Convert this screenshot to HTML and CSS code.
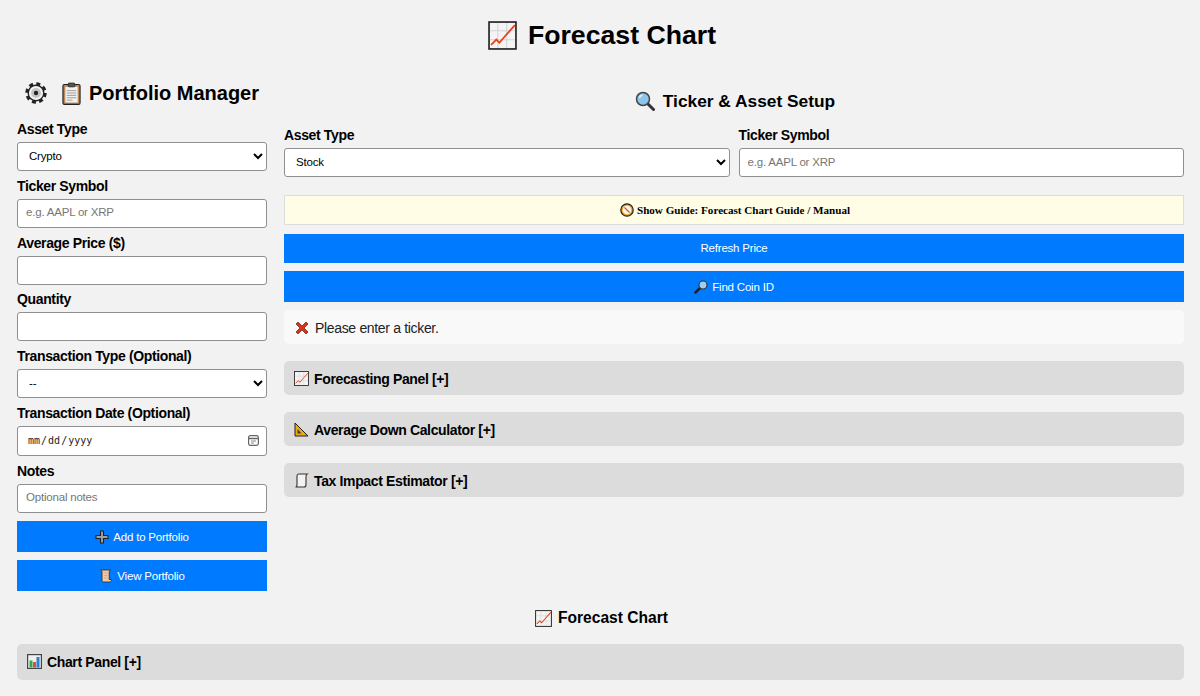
FILE: index.html
```html
<!DOCTYPE html>
<html lang="en">
<head>
<meta charset="utf-8">
<title>Forecast Chart</title>
<link rel="stylesheet" href="styles.css">
</head>
<body>
<svg class="defs" width="0" height="0" aria-hidden="true">
  <defs>
    <symbol id="chart" viewBox="0 0 28 28">
      <rect x="1" y="1" width="26" height="26" fill="#f4f4f4" stroke="#222" stroke-width="1.6"/>
      <path d="M9.5 2v24M18 2v24M2 9.5h24M2 18h24" stroke="#d4d4d4" stroke-width="1" fill="none"/>
      <path d="M3 23l5-5 3 3 6-7 9-10" stroke="#e8421c" stroke-width="1.8" fill="none"/>
    </symbol>
  </defs>
</svg>
<h1 class="page-title"><svg class="ic ic-title"><use href="#chart"/></svg>Forecast Chart</h1>
<main class="layout">
  <aside class="sidebar">
    <h2 class="side-title">
      <svg class="ic ic-gear" viewBox="0 0 24 24"><circle cx="12" cy="12" r="10" fill="none" stroke="#222" stroke-width="3.400" stroke-dasharray="4.300 3.554"/><circle cx="12" cy="12" r="8.500" fill="#f2f2f2" stroke="#222" stroke-width="1.500"/><circle cx="12" cy="12" r="5.400" fill="#c4c4c4"/><circle cx="12" cy="12" r="2.400" fill="#222"/></svg>
      <svg class="ic ic-clip" viewBox="0 0 20 24"><rect x="1" y="2.500" width="18" height="21" rx="1.500" fill="#b98a5e" stroke="#222" stroke-width="1.200"/><rect x="3.500" y="5" width="13" height="16.500" fill="#f1f1ee"/><path d="M5 9h10M5 11.500h10M5 14h10M5 16.500h10M5 19h6" stroke="#999" stroke-width="1"/><rect x="6.500" y="1" width="7" height="4" rx="1" fill="#555" stroke="#222" stroke-width=".8"/></svg>
      Portfolio Manager
    </h2>
    <form class="form">
      <label class="lbl">Asset Type</label>
      <select class="ctl"><option>Crypto</option></select>
      <label class="lbl">Ticker Symbol</label>
      <input class="ctl" type="text" placeholder="e.g. AAPL or XRP">
      <label class="lbl">Average Price ($)</label>
      <input class="ctl" type="text">
      <label class="lbl">Quantity</label>
      <input class="ctl" type="text">
      <label class="lbl">Transaction Type (Optional)</label>
      <select class="ctl"><option>--</option></select>
      <label class="lbl">Transaction Date (Optional)</label>
      <input class="ctl ctl-date" type="date">
      <label class="lbl">Notes</label>
      <input class="ctl" type="text" placeholder="Optional notes">
      <button type="button" class="btn btn-add"><svg class="ic ic-sm" viewBox="0 0 14 14"><path d="M5.500 1h3v4.500H13v3H8.500V13h-3V8.500H1v-3h4.500z" fill="#a0a0a0" stroke="#222" stroke-width="1.100"/></svg>Add to Portfolio</button>
      <button type="button" class="btn btn-view"><svg class="ic ic-sm" viewBox="0 0 14 14"><path d="M1.500 1h10c-1 .5-1.300 1.500-1.300 3v6.500h2.300c0 1.500-1 2.500-2 2.500H4.500c-1 0-1.500-.8-1.500-2V3C3 2 2.500 1.500 1.500 1z" fill="#f2c9a8" stroke="#333" stroke-width=".9"/><path d="M5 4h3.500M5 6.500h3.500M5 9h3.500" stroke="#cfa184" stroke-width=".8"/></svg>View Portfolio</button>
    </form>
  </aside>
  <section class="content">
    <h2 class="setup-title">
      <svg class="ic ic-search" viewBox="0 0 20 20"><path d="M12.500 12.500l6 6" stroke="#333" stroke-width="3" stroke-linecap="round"/><circle cx="8" cy="8" r="6.500" fill="#8ec4ea" stroke="#444" stroke-width="1.500"/><path d="M4.500 7a4 4 0 0 1 3-3" stroke="#e2f3ff" stroke-width="1.500" fill="none"/></svg>
      Ticker &amp; Asset Setup
    </h2>
    <div class="fields">
      <div class="field">
        <label class="lbl">Asset Type</label>
        <select class="ctl"><option>Stock</option></select>
      </div>
      <div class="field">
        <label class="lbl">Ticker Symbol</label>
        <input class="ctl" type="text" placeholder="e.g. AAPL or XRP">
      </div>
    </div>
    <div class="guide"><svg class="ic ic-sm" viewBox="0 0 14 14"><circle cx="7" cy="7" r="6.200" fill="#e8a52a" stroke="#222" stroke-width="1.200"/><circle cx="7" cy="7" r="4.300" fill="#fff6e6"/><path d="M4.500 4.500L9.500 9.500" stroke="#c6503c" stroke-width="1.100"/></svg>Show Guide: Forecast Chart Guide / Manual</div>
    <button type="button" class="btn btn-refresh">Refresh Price</button>
    <button type="button" class="btn btn-find"><svg class="ic ic-sm" viewBox="0 0 14 14"><path d="M6 8L1.500 12.500" stroke="#222" stroke-width="2.500" stroke-linecap="round"/><circle cx="9" cy="5" r="4" fill="#9fd0f0" stroke="#333" stroke-width="1.100"/></svg>Find Coin ID</button>
    <div class="status"><svg class="ic ic-x" viewBox="0 0 14 14"><path d="M1 3l2-2 4 4 4-4 2 2-4 4 4 4-2 2-4-4-4 4-2-2 4-4z" fill="#d8341a" stroke="#6b1a0c" stroke-width=".7"/></svg>Please enter a ticker.</div>
    <div class="panel"><svg class="ic ic-panel"><use href="#chart"/></svg>Forecasting Panel [+]</div>
    <div class="panel"><svg class="ic ic-panel" viewBox="0 0 15 15"><path d="M1 1l13 13H1z" fill="#f0a90f" stroke="#222" stroke-width="1"/><path d="M3.500 7l4 4.500h-4z" fill="#3a3a3a"/></svg>Average Down Calculator [+]</div>
    <div class="panel"><svg class="ic ic-panel" viewBox="0 0 15 15"><path d="M4.500 1H13c-.8.500-1 1.500-1 3v8c0 1-.5 2-2 2H1.500c1 0 1.500-1 1.500-2V3c0-1 .5-2 1.500-2z" fill="#f2f2f2" stroke="#333" stroke-width="1.100"/></svg>Tax Impact Estimator [+]</div>
  </section>
</main>
<h2 class="bottom-title"><svg class="ic ic-panel-lg"><use href="#chart"/></svg>Forecast Chart</h2>
<div class="panel panel-bottom"><svg class="ic ic-panel" viewBox="0 0 15 15"><rect x=".6" y=".6" width="13.800" height="13.800" fill="#eef0f0" stroke="#444" stroke-width="1.200"/><rect x="2.500" y="6.500" width="3" height="7" fill="#2eaa4a"/><rect x="6" y="8" width="3" height="5.500" fill="#ea4a2e"/><rect x="9.500" y="3" width="3" height="10.500" fill="#2a7fd8"/></svg>Chart Panel [+]</div>
</body>
</html>
```
FILE: styles.css
```css
* { box-sizing: border-box; }
body {
  margin: 0;
  padding: 0 16px 0 17px;
  background: #f2f2f2;
  color: #000;
  font-family: "Liberation Sans", Arial, sans-serif;
  overflow: hidden;
}
.defs { position: absolute; }
.ic { display: inline-block; flex: none; }
.page-title {
  margin: 0;
  height: 70px;
  padding-left: 3px;
  display: flex;
  align-items: center;
  justify-content: center;
  gap: 11px;
  font-size: 26.67px;
  font-weight: 700;
}
.ic-title { width: 29px; height: 29px; }
.layout { display: flex; gap: 17px; }
.sidebar { width: 250px; flex: none; }
.content { flex: 1; min-width: 0; }
.side-title {
  margin: 0 0 5px;
  height: 46px;
  padding-left: 8px;
  display: flex;
  align-items: center;
  font-size: 20px;
  font-weight: 700;
  white-space: nowrap;
}
.ic-gear { width: 22px; height: 22px; margin-right: 15px; }
.ic-clip { width: 19px; height: 23px; margin-right: 8px; }
.form { display: flex; flex-direction: column; }
.lbl {
  display: block;
  font-size: 14px;
  letter-spacing: -.36px;
  line-height: 16px;
  font-weight: 700;
  height: 17px;
  margin-bottom: 4px;
}
.ctl {
  display: block;
  width: 100%;
  height: 29px;
  margin: 0 0 6.8px;
  padding: 0 8px 2px;
  font-family: "Liberation Sans", Arial, sans-serif;
  font-size: 11.500px;
  letter-spacing: -.2px;
  background: #fff;
  color: #000;
  border: 1px solid #8f8f8f;
  border-radius: 3px;
}
select.ctl { padding: 0 7px 2px; }
.ctl-date {
  height: 30px;
  padding: 0 7px 0 9px;
  font-family: "DejaVu Sans Mono", "Liberation Mono", monospace;
  font-size: 10px;
  letter-spacing: 0;
  color: #222;
}
.ctl-date::-webkit-calendar-picker-indicator {
  width: 11px;
  height: 11px;
  padding: 0;
  margin: 0 0 0 3px;
  background: url("data:image/svg+xml;utf8,<svg xmlns='http://www.w3.org/2000/svg' viewBox='0 0 11 11'><rect x='.6' y='.6' width='9.800' height='9.800' rx='1.800' fill='none' stroke='%23666' stroke-width='1.200'/><path d='M1 3.500h9' stroke='%23666' stroke-width='1.500'/><path d='M3 6h5M3 8h3' stroke='%23888'/></svg>") center / 11px 11px no-repeat;
}
.btn {
  display: flex;
  align-items: center;
  justify-content: center;
  width: 100%;
  border: 0;
  background: #007bff;
  color: #fff;
  font-family: "Liberation Sans", Arial, sans-serif;
  font-size: 11.500px;
  letter-spacing: -.2px;
  padding: 2px 0 0;
  gap: 4px;
}
.btn-add { height: 31px; margin-top: 1.200px; margin-bottom: 8px; }
.btn-view { height: 31px; }
.btn-refresh { height: 29px; padding-top: 0; margin-bottom: 8px; }
.btn-find { height: 31px; margin-bottom: 8px; }
.ic-sm { width: 14px; height: 14px; }
.setup-title {
  margin: 5px 0 0;
  height: 52px;
  padding-left: 2px;
  display: flex;
  align-items: center;
  justify-content: center;
  gap: 8px;
  font-size: 17.33px;
  font-weight: 700;
}
.ic-search { width: 20px; height: 20px; }
.fields { display: flex; gap: 9px; margin-bottom: 11.2px; }
.field { flex: 1; min-width: 0; }
.guide {
  display: flex;
  align-items: center;
  justify-content: center;
  gap: 3px;
  height: 30px;
  margin-bottom: 9px;
  padding-left: 2px;
  background: #fffde6;
  border: 1px solid #ddd;
  font-family: "Liberation Serif", "Times New Roman", serif;
  font-size: 11.100px;
  font-weight: 700;
}
.status {
  display: flex;
  align-items: center;
  gap: 6px;
  height: 34px;
  padding: 2px 0 0 11px;
  background: #f9f9f9;
  border-radius: 5px;
  font-size: 14px;
  letter-spacing: -.33px;
  color: #222;
}
.ic-x { width: 14px; height: 14px; }
.panel {
  display: flex;
  align-items: center;
  gap: 5px;
  height: 34px;
  margin-top: 17px;
  padding: 2px 0 0 10px;
  background: #dcdcdc;
  border-radius: 5px;
  font-size: 14px;
  letter-spacing: -.36px;
  font-weight: 700;
}
.ic-panel { width: 15px; height: 15px; }
.bottom-title {
  margin: 0;
  height: 53px;
  padding: 2px 0 0 2px;
  display: flex;
  align-items: center;
  justify-content: center;
  gap: 6px;
  font-size: 15.600px;
  font-weight: 700;
}
.ic-panel-lg { width: 17px; height: 17px; }
.panel-bottom { margin-top: 0; height: 36px; padding-top: 0; }
input::placeholder { color: #767676; }
```
